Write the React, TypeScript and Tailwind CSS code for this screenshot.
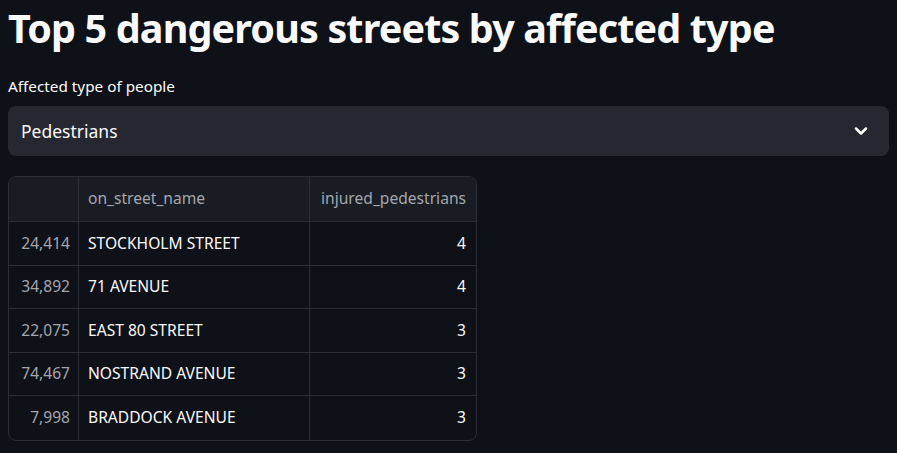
import { ChevronDown } from 'lucide-react'

const rows = [
	{ idx: '24,414', name: 'STOCKHOLM STREET', val: 4 },
	{ idx: '34,892', name: '71 AVENUE', val: 4 },
	{ idx: '22,075', name: 'EAST 80 STREET', val: 3 },
	{ idx: '74,467', name: 'NOSTRAND AVENUE', val: 3 },
	{ idx: '7,998', name: 'BRADDOCK AVENUE', val: 3 },
]

const App = () => {
	return (
		<div className="min-h-[453px] bg-[#0e1117] text-[#fafafa] px-[8px] pt-[2px]" style={{ fontFamily: '"Noto Sans", sans-serif' }}>
			<h1 className="text-[39.5px] font-bold leading-[52px] tracking-[-0.85px]">Top 5 dangerous streets by affected type</h1>
			<div className="mt-[22px] text-[15.3px] leading-[20px]">Affected type of people</div>
			<div className="mt-[10px] h-[50px] rounded-[8px] bg-[#262730] flex items-center justify-between pl-[13px] pr-[18px]">
				<span className="text-[17.5px]">Pedestrians</span>
				<ChevronDown size={20} strokeWidth={3} className="text-white" />
			</div>
			<div className="mt-[20px] w-[469px] rounded-[8px] border border-[#2b2e36] overflow-hidden text-[15.6px]">
				<div className="flex h-[45px] bg-[#1a1c24] border-b border-[#2b2e36] text-[#a3a6ad]">
					<div className="w-[70px] border-r border-[#2b2e36]"></div>
					<div className="w-[231px] border-r border-[#2b2e36] flex items-center px-[9px]">on_street_name</div>
					<div className="flex-1 flex items-center justify-end px-[10px]">injured_pedestrians</div>
				</div>
				{rows.map((r, i) => (
					<div key={r.idx} className={`flex h-[43.5px] ${i < rows.length - 1 ? 'border-b border-[#2b2e36]' : ''}`}>
						<div className="w-[70px] border-r border-[#2b2e36] flex items-center justify-end px-[8px] text-[#a3a6ad]">{r.idx}</div>
						<div className="w-[231px] border-r border-[#2b2e36] flex items-center px-[9px]">{r.name}</div>
						<div className="flex-1 flex items-center justify-end px-[10px]">{r.val}</div>
					</div>
				))}
			</div>
		</div>
	)
}

export default App
